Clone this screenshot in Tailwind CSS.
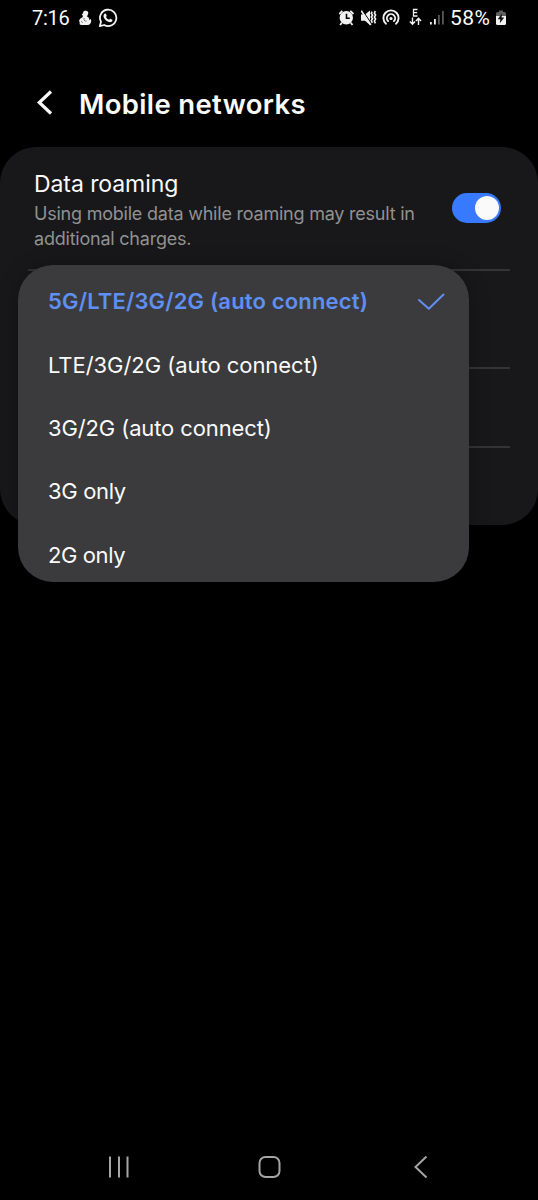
<!DOCTYPE html>
<html lang="en">
<head>
<meta charset="utf-8">
<title>Mobile networks</title>
<script src="https://cdn.jsdelivr.net/npm/@tailwindcss/browser@4"></script>
</head>
<body class="bg-black">
<div class="relative flex h-[1200px] w-[538px] flex-col overflow-hidden bg-black font-['Inter','Liberation_Sans',sans-serif] text-[#fafafa]">
  <header class="flex h-9 shrink-0 items-center justify-between pl-8 pr-[31px]">
    <div class="flex items-center">
      <span class="w-[38px] whitespace-nowrap font-['Roboto',sans-serif] text-[20px] leading-9 tracking-[-0.3px]">7:16</span>
      <svg class="ml-2 h-5 w-[14px]" viewBox="0 0 14 20" fill="#f2f2f2"><path d="M6.8 2.8C9 2.2 10.8 3.6 10.2 5.8L9 8.4C11.2 9.2 11.5 11 11.2 12.3C12 12 12 11 12.8 11C13.8 13.5 12.8 16.5 10 17H3.8C1.5 17 1 15.8 1.9 14.8C.4 13 1.3 11 3 10.2L4.8 9L4.6 7.2L3.6 6.2L5 5.4C4.9 4 5.6 3.1 6.8 2.8Z"/><path d="M6.2 10C5.4 12 6.6 13.5 8.6 13M3 13.3L4.7 14.6" fill="none" stroke="#444" stroke-width=".7"/></svg>
      <svg class="ml-[6px] h-5 w-5" viewBox="0 0 20 20" fill="none"><path d="M1.8 18.2L3 13.8A8.2 8.2 0 1 1 6.2 17L1.8 18.2Z" stroke="#f2f2f2" stroke-width="1.8" stroke-linejoin="round"/><path d="M7 5.5C7.5 5.4 7.8 5.5 8 6L8.7 7.7C8.8 8.1 8.2 8.7 8 9C8.7 10.3 9.7 11.2 11.1 11.8C11.5 11.5 12 10.7 12.5 10.8L14.2 11.7C14.7 12 14.4 12.8 14.1 13.3C13.2 14.5 11.7 14.3 10.3 13.8C8.1 13 6.5 11 5.8 9.5C5.1 7.9 5.5 6.2 7 5.5Z" fill="#f2f2f2"/></svg>
    </div>
    <div class="flex items-center">
      <svg class="h-5 w-4" viewBox="0 0 16 20" fill="none"><circle cx="7.3" cy="9.7" r="6.7" fill="#f2f2f2"/><path d="M7.5 5.8V10.2H10.8" stroke="#000" stroke-width="1.6"/><path d="M.2 6L3.3 2.8M14.4 6L11.3 2.8M2.8 14.8L1.1 17M11.8 14.8L13.5 17" stroke="#f2f2f2" stroke-width="1.8"/></svg>
      <svg class="ml-[6px] h-5 w-4" viewBox="0 0 16 20" fill="none"><path d="M0 6.6H4L9 2.4V17L4 12.8H0Z" fill="#f2f2f2"/><path d="M1.3 2.3L10.3 15.6" stroke="#000" stroke-width="1.1"/><path d="M.2 2.8L9.8 17" stroke="#f2f2f2" stroke-width="1.7"/><path d="M11.1 3.6L10.3 5.4L11.5 7.2L10.3 9L11.5 10.8L10.3 12.6L11.3 14.8M14.3 3.1L13.4 5.1L14.6 7.1L13.4 9L14.6 11L13.4 13L14.4 15.4" stroke="#f2f2f2" stroke-width="1.6"/></svg>
      <svg class="ml-[5px] h-5 w-[18px]" viewBox="0 0 18 20" fill="none" stroke="#f2f2f2" stroke-width="1.9" stroke-linecap="round"><path d="M4 15.7A7.6 7.6 0 1 1 14 15.7"/><path d="M6.1 13.1A4.1 4.1 0 1 1 11.9 13.1"/><circle cx="9" cy="10.5" r="1.6" fill="#f2f2f2" stroke="none"/></svg>
      <svg class="ml-[9px] h-5 w-[14px]" viewBox="0 0 14 20" fill="none" stroke="#f2f2f2"><path d="M8.5 1.5H4.5V8H8.5M4.5 4.7H8.2" stroke-width="1.3"/><path d="M3.5 9.5V16M.9 13.6L3.5 16.2L6.1 13.6M9.5 17V10.4M6.9 12.9L9.5 10.3L12.1 12.9" stroke-width="1.4"/></svg>
      <svg class="ml-[7px] h-5 w-[15px]" viewBox="0 0 15 20"><path d="M0 14H1.8V16.5H0Z M4 11H5.8V16.5H4Z" fill="#f2f2f2"/><path d="M8 7H9.8V16.5H8Z M12 3H13.8V16.5H12Z" fill="#585858"/></svg>
      <span class="ml-[5px] w-[42px] whitespace-nowrap font-['Roboto',sans-serif] text-[21px] leading-9 tracking-[0.5px]">58%</span>
      <svg class="ml-[3px] h-5 w-3" viewBox="0 0 12 20"><path d="M4 2.5H8V4H9.5Q11 4 11 5.5V8H1V5.5Q1 4 2.5 4H4Z" fill="#606060"/><path d="M1 8H11V15.5Q11 17 9.5 17H2.5Q1 17 1 15.5Z" fill="#f2f2f2"/><path d="M7 5.2L2.7 11.2H5.3L4.8 15.3L9.3 9.4H6.6Z" fill="#111"/></svg>
    </div>
  </header>
  <div class="flex h-[111px] shrink-0 items-center pl-9 pt-[23px]">
    <svg class="h-8 w-5" viewBox="0 0 20 32" fill="none" stroke="#fafafa" stroke-width="3.2"><path d="M15 4.5L3.3 15.5L15 26.5"/></svg>
    <h1 class="ml-[23px] mt-[2px] whitespace-nowrap text-[27.5px] font-semibold leading-8 tracking-[0.35px]">Mobile networks</h1>
  </div>
  <main class="h-[378px] shrink-0 rounded-[36px] bg-[#18181a]">
    <section class="flex h-[122px] items-start pl-[34px] pr-[37px] pt-[22px]">
      <div class="flex-1">
        <h2 class="whitespace-nowrap text-[23px] leading-[30px] tracking-[-0.08px]">Data roaming</h2>
        <p class="mt-[2px] whitespace-nowrap text-[18px] leading-[25px] tracking-[-0.22px] text-[#919193]">Using mobile data while roaming may result in<br>additional charges.</p>
      </div>
      <div class="mt-6 flex h-[30px] w-[49px] items-center justify-end rounded-full bg-[#387aff] pr-[2px]"><span class="size-6 rounded-full bg-[#fafafa]"></span></div>
    </section>
    <div class="mx-7 h-[98px] border-t-2 border-[#343436]"></div>
    <div class="mx-7 h-[79px] border-t-2 border-[#343436]"></div>
    <div class="mx-7 h-[78px] border-t-2 border-[#343436]"></div>
  </main>
  <ul class="absolute left-[18px] top-[265px] flex h-[317px] w-[451px] flex-col rounded-[35px] bg-[#3b3b3d] px-[30px] pt-[5px] text-[22px] shadow-[0_0_20px_rgba(0,0,0,0.28)]">
    <li class="flex h-[63.4px] shrink-0 items-center justify-between font-semibold tracking-[0.17px] text-[#5f8ff2]"><span>5G/LTE/3G/2G (auto connect)</span><svg class="-mr-[7px] h-6 w-[30px]" viewBox="0 0 30 24" fill="none" stroke="#5f8ff2" stroke-width="2"><path d="M3 10L12.8 18.8L27.5 4.5" stroke-linecap="round" stroke-linejoin="round"/></svg></li>
    <li class="flex h-[63.4px] shrink-0 items-center tracking-[-0.04px]">LTE/3G/2G (auto connect)</li>
    <li class="flex h-[63.4px] shrink-0 items-center tracking-[-0.12px]">3G/2G (auto connect)</li>
    <li class="flex h-[63.4px] shrink-0 items-center tracking-[-0.35px]">3G only</li>
    <li class="flex h-[63.4px] shrink-0 items-center tracking-[-0.4px]">2G only</li>
  </ul>
  <nav class="mt-auto flex h-[66px] shrink-0 items-center justify-between px-[106px]">
    <svg class="h-6 w-6" viewBox="0 0 24 24" stroke="#a5a5a5" stroke-width="2"><path d="M4 1.5V22.5M13 1.5V22.5M21.5 1.5V22.5"/></svg>
    <svg class="h-6 w-6" viewBox="0 0 24 24" fill="none" stroke="#a5a5a5" stroke-width="2"><rect x="2.5" y="2" width="20" height="20" rx="6"/></svg>
    <svg class="h-6 w-6" viewBox="0 0 24 24" fill="none" stroke="#a5a5a5" stroke-width="2"><path d="M18.5 1.5L7.5 12L18.5 22.5"/></svg>
  </nav>
</div>
</body>
</html>
